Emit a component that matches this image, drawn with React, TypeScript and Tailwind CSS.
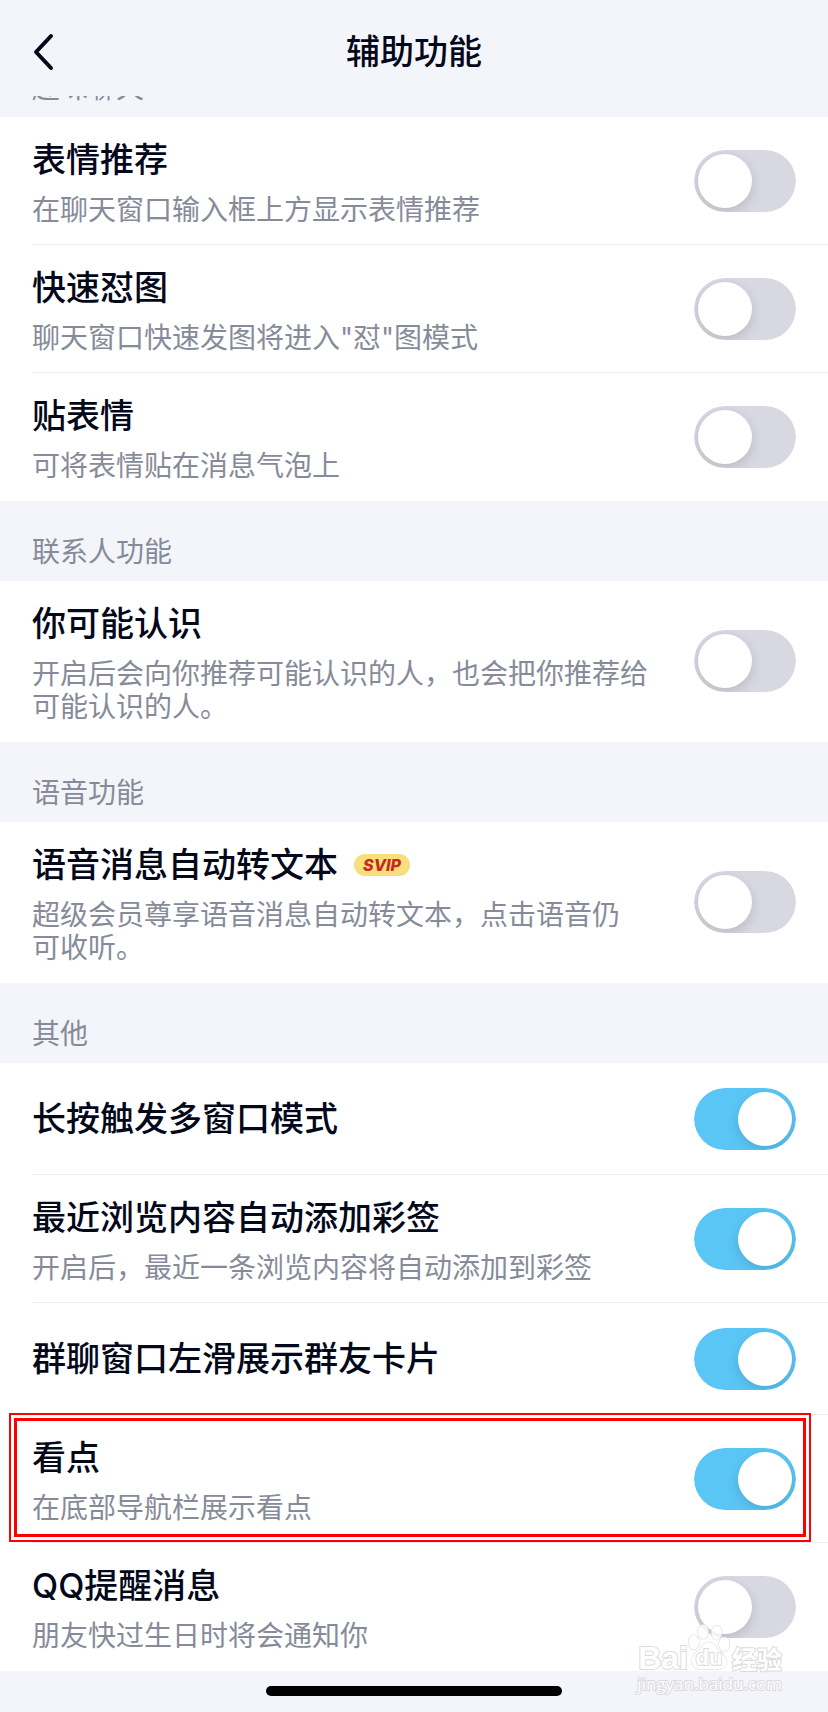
import React, { useState } from 'react'

type Item = {
  id: string
  title: string
  desc?: string
  svip?: boolean
  on?: boolean
  marked?: boolean
}

type Group = {
  name: string
  items: Item[]
}

const groups: Group[] = [
  {
    name: '趣味聊天',
    items: [
      {
        id: 'sticker-suggest',
        title: '表情推荐',
        desc: '在聊天窗口输入框上方显示表情推荐',
      },
      {
        id: 'quick-image',
        title: '快速怼图',
        desc: '聊天窗口快速发图将进入"怼"图模式',
      },
      {
        id: 'sticker-attach',
        title: '贴表情',
        desc: '可将表情贴在消息气泡上',
      },
    ],
  },
  {
    name: '联系人功能',
    items: [
      {
        id: 'people',
        title: '你可能认识',
        desc: '开启后会向你推荐可能认识的人，也会把你推荐给\n可能认识的人。',
      },
    ],
  },
  {
    name: '语音功能',
    items: [
      {
        id: 'voice-text',
        title: '语音消息自动转文本',
        desc: '超级会员尊享语音消息自动转文本，点击语音仍\n可收听。',
        svip: true,
      },
    ],
  },
  {
    name: '其他',
    items: [
      { id: 'multi-window', title: '长按触发多窗口模式', on: true },
      {
        id: 'auto-tag',
        title: '最近浏览内容自动添加彩签',
        desc: '开启后，最近一条浏览内容将自动添加到彩签',
        on: true,
      },
      { id: 'member-card', title: '群聊窗口左滑展示群友卡片', on: true },
      {
        id: 'kandian',
        title: '看点',
        desc: '在底部导航栏展示看点',
        on: true,
        marked: true,
      },
      {
        id: 'reminder',
        title: 'QQ提醒消息',
        desc: '朋友快过生日时将会通知你',
      },
    ],
  },
]

function Switch({ id, initial }: { id: string; initial: boolean }) {
  const [checked, setChecked] = useState(initial)

  return (
    <span className="h-[62px] w-[102px] shrink-0 overflow-hidden rounded-full">
      <input
        id={id}
        type="checkbox"
        role="switch"
        checked={checked}
        onChange={(e) => setChecked(e.target.checked)}
        className="block h-full w-full cursor-pointer appearance-none rounded-full bg-[#d8d8e2] p-1 before:block before:size-[54px] before:rounded-full before:bg-white before:shadow-[0_4px_12px_rgba(0,0,0,0.14)] before:content-[''] checked:bg-[#5ac6f6] checked:before:ml-10"
      />
    </span>
  )
}

function SectionTitle({ children }: { children: React.ReactNode }) {
  return (
    <h2 className="shrink-0 px-8 pt-[35px] pb-3 text-[28px] leading-[33px] text-[#878b99]">
      {children}
    </h2>
  )
}

function Row({ item, last }: { item: Item; last: boolean }) {
  return (
    <li className="relative pl-8">
      <div
        className={`flex min-h-28 items-center justify-between gap-4 border-b pr-8 ${
          last ? 'border-transparent' : 'border-[#ebebf3]'
        } ${item.desc ? 'py-[17px]' : ''}`}
      >
        <label htmlFor={item.id} className="min-w-0">
          <span className="flex items-center gap-4 text-[34px] leading-[52px] font-medium text-[#03081a]">
            {item.title}
            {item.svip && (
              <span className="flex h-[22px] w-14 items-center justify-center rounded-full bg-[#f8df7c] font-['Inter'] text-base leading-[22px] font-extrabold text-[#c8281e] italic">
                SVIP
              </span>
            )}
          </span>
          {item.desc && (
            <span className="mt-2 block text-[28px] leading-[33px] whitespace-pre-line text-[#878b99]">
              {item.desc}
            </span>
          )}
        </label>
        <Switch id={item.id} initial={!!item.on} />
      </div>
      {item.marked && (
        <div className="pointer-events-none absolute -top-0.5 right-[17px] bottom-px left-[9px] border-2 border-[#ff0000] p-[3px]">
          <div className="h-full border-3 border-[#ff0000]" />
        </div>
      )}
    </li>
  )
}

function Watermark() {
  return (
    <div className="pointer-events-none absolute right-[46px] bottom-4 flex flex-col items-end text-white opacity-80 [-webkit-text-stroke:2px_#d4d4d8] [paint-order:stroke_fill]">
      <div className="flex h-[50px] items-end font-['Liberation_Sans'] leading-[28px] font-bold">
        <span className="text-[32px]">Bai</span>
        <span className="relative flex h-[50px] w-[42px] items-end justify-center text-[22px]">
          <svg
            viewBox="0 0 44 50"
            className="absolute inset-0 h-full w-full"
            fill="#ffffff"
            stroke="#d4d4d8"
            strokeWidth="1.2"
          >
            <ellipse cx="6" cy="20" rx="5.5" ry="7.5" />
            <ellipse cx="16" cy="9" rx="5.5" ry="7.5" />
            <ellipse cx="30" cy="10" rx="5.5" ry="7.5" />
            <ellipse cx="38" cy="22" rx="5.5" ry="7.5" />
            <path d="M22 20c-6 0-8 6-12 9-4 4-8 7-6 13 2 7 9 7 18 6 9 1 17 1 18-6 1-6-3-9-7-13-4-4-6-9-11-9z" />
          </svg>
          <span className="relative">du</span>
        </span>
        <span className="pl-0.5 font-['Noto_Sans_CJK_SC'] text-[25px]">
          经验
        </span>
      </div>
      <div className="font-['Open_Sans'] text-[17px] leading-[24px]">
        jingyan.baidu.com
      </div>
    </div>
  )
}

export default function App() {
  return (
    <div className="relative min-h-screen bg-[#f4f5fa] font-['Inter','Noto_Sans_CJK_SC',sans-serif]">
      <header className="grid h-24 grid-cols-[1fr_auto_1fr] items-center px-8 pt-2 text-[#03081a]">
        <button type="button" aria-label="返回" className="w-6">
          <svg
            viewBox="0 0 24 40"
            className="h-10 w-6"
            fill="none"
            stroke="currentColor"
            strokeWidth="4"
            strokeLinecap="round"
            strokeLinejoin="round"
          >
            <path d="M19 4L4 20l15 16" />
          </svg>
        </button>
        <h1 className="text-[34px] leading-[52px] font-medium">辅助功能</h1>
      </header>

      <main>
        {groups.map((group, i) => (
          <section key={group.name}>
            {/* first group is scrolled under the header */}
            <div
              className={
                i === 0 ? 'flex h-[21px] flex-col justify-end overflow-hidden' : ''
              }
            >
              <SectionTitle>{group.name}</SectionTitle>
            </div>
            <ul className="bg-white">
              {group.items.map((item, j) => (
                <Row
                  key={item.id}
                  item={item}
                  last={j === group.items.length - 1}
                />
              ))}
            </ul>
          </section>
        ))}
      </main>

      <footer className="flex justify-center pt-[15px] pb-4">
        <div className="h-[10px] w-[296px] rounded-full bg-black" />
      </footer>
      <Watermark />
    </div>
  )
}
